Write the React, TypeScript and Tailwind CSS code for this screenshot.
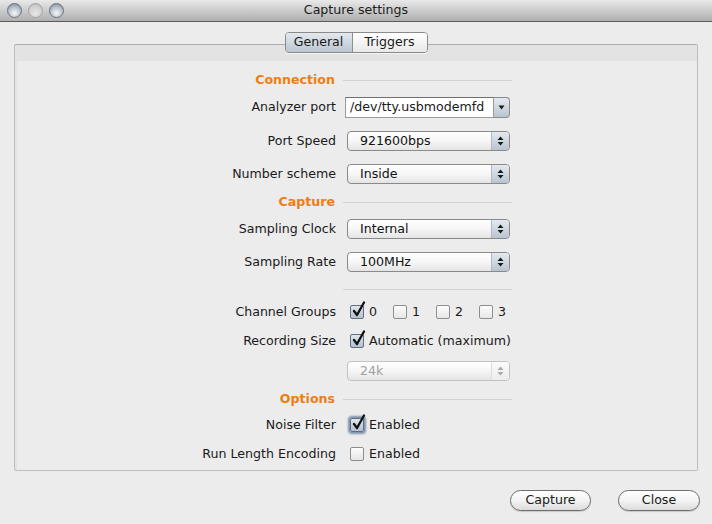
import React from "react";

function Arrows({ disabled = false }: { disabled?: boolean }) {
  const c = disabled ? "#a8a8a8" : "#1a1a1a";
  return (
    <svg width="7" height="10" viewBox="0 0 7 10">
      <path d="M0.5 4 L3.5 0.5 L6.5 4 Z" fill={c} />
      <path d="M0.5 6 L3.5 9.5 L6.5 6 Z" fill={c} />
    </svg>
  );
}

function Popup({ value, disabled = false }: { value: string; disabled?: boolean }) {
  return (
    <div
      className={`ml-[11px] w-[163px] h-[20px] flex rounded-[4px] border ${
        disabled ? "border-[#c2c2c2] text-[#a0a0a0]" : "border-[#8a8a8a] text-[#111]"
      } bg-gradient-to-b from-[#ffffff] via-[#f6f6f6] to-[#e4e4e4] overflow-hidden`}
    >
      <div className="flex-1 flex items-center pl-[12px] leading-none">{value}</div>
      <div
        className={`w-[18px] flex items-center justify-center border-l ${
          disabled
            ? "border-[#dedede] bg-gradient-to-b from-[#fbfbfb] to-[#ececec]"
            : "border-[#b0b8c2] bg-gradient-to-b from-[#e3e9ef] via-[#cfd8e1] to-[#b9c4cf]"
        }`}
      >
        <Arrows disabled={disabled} />
      </div>
    </div>
  );
}

function CheckBox({ checked = false, focus = false }: { checked?: boolean; focus?: boolean }) {
  return (
    <div
      className={`relative w-[14px] h-[14px] shrink-0 rounded-[2px] border ${
        checked
          ? "border-[#5f6e80] bg-gradient-to-b from-[#dfe6ee] to-[#b4c1cf]"
          : "border-[#8e8e8e] bg-gradient-to-b from-[#fdfdfd] to-[#e6e6e6]"
      } ${focus ? "shadow-[0_0_2px_2px_rgba(90,118,150,0.75)]" : ""}`}
    >
      {checked && (
        <svg
          className="absolute left-[1px] top-[-5px]"
          width="14"
          height="17"
          viewBox="0 0 14 17"
        >
          <path
            d="M2 10 L5 14 L12 1.5"
            stroke="#111"
            strokeWidth="2.3"
            fill="none"
            strokeLinecap="round"
            strokeLinejoin="round"
          />
        </svg>
      )}
    </div>
  );
}

function Label({ children }: { children: React.ReactNode }) {
  return <div className="w-[321px] text-right shrink-0">{children}</div>;
}

function Row({ label, mt, children }: { label?: string; mt: string; children?: React.ReactNode }) {
  return (
    <div className={`flex items-center h-[22px] ${mt}`}>
      <Label>{label}</Label>
      {children}
    </div>
  );
}

function Section({ title, mt }: { title?: string; mt: string }) {
  return (
    <div className={`flex items-center h-[18px] ${mt}`}>
      <div className="w-[320px] text-right shrink-0 font-bold text-[#f07d14]">{title}</div>
      <div className="ml-[8px] w-[169px] h-px bg-[#d2d2d2]" />
    </div>
  );
}

export default function App() {
  return (
    <div className="w-[712px] h-[524px] bg-[#ececec] flex flex-col overflow-hidden font-['DejaVu_Sans',sans-serif] text-[12.6px] text-[#1a1a1a]">
      {/* Title bar */}
      <div className="relative h-[22px] shrink-0 flex items-center justify-center bg-gradient-to-b from-[#e9e9e9] to-[#afafaf] border-b border-[#5c5c5c]">
        <div className="absolute left-[7px] top-[3px] flex gap-[6px]">
          <div className="w-[15px] h-[15px] rounded-full border border-[#6b7480] bg-[radial-gradient(circle_at_50%_70%,#f4f6f8_0%,#b7c0c9_55%,#6f7b88_100%)]" />
          <div className="w-[15px] h-[15px] rounded-full border border-[#a4a4a4] bg-[radial-gradient(circle_at_50%_70%,#e6e6e6_0%,#cfcfcf_60%,#b3b3b3_100%)]" />
          <div className="w-[15px] h-[15px] rounded-full border border-[#6b7480] bg-[radial-gradient(circle_at_50%_70%,#f4f6f8_0%,#b7c0c9_55%,#6f7b88_100%)]" />
        </div>
        <span className="text-[#1c1c1c]">Capture settings</span>
      </div>

      {/* Tabs */}
      <div className="relative z-10 mt-[10px] flex justify-center">
        <div className="flex h-[21px] rounded-[4px] border border-[#8a8a8a] overflow-hidden shadow-[0_1px_0_rgba(255,255,255,0.6)]">
          <div className="w-[67px] flex items-center justify-center bg-gradient-to-b from-[#e4e9ef] via-[#cfd7df] to-[#bcc6d0] border-r border-[#8e8e8e]">
            General
          </div>
          <div className="w-[74px] flex items-center justify-center bg-gradient-to-b from-[#ffffff] to-[#e9e9e9]">
            Triggers
          </div>
        </div>
      </div>

      {/* Panel */}
      <div className="mt-[-9px] mx-[14px] h-[427px] shrink-0 border border-[#bdbdbd] border-t-[#acacac] rounded-[2px] shadow-[inset_2px_16px_0_#e3e3e3]">
        <div className="flex flex-col pt-[26px]">
          <Section title="Connection" mt="mt-0" />
          <Row label="Analyzer port" mt="mt-[7px]">
            <div className="ml-[9px] w-[165px] h-[21px] flex">
              <div className="flex-1 bg-white border border-[#9b9b9b] border-t-[#6f6f6f] flex items-center pl-[4px] leading-none overflow-hidden whitespace-nowrap">
                /dev/tty.usbmodemfd
              </div>
              <div className="w-[16px] flex items-center justify-center rounded-r-[4px] border border-l-0 border-[#8a8a8a] bg-gradient-to-b from-[#e3e9ef] via-[#cfd8e1] to-[#b9c4cf]">
                <svg width="7" height="5" viewBox="0 0 7 5">
                  <path d="M0.5 0.5 L6.5 0.5 L3.5 4.5 Z" fill="#1a1a1a" />
                </svg>
              </div>
            </div>
          </Row>
          <Row label="Port Speed" mt="mt-[12px]">
            <Popup value="921600bps" />
          </Row>
          <Row label="Number scheme" mt="mt-[11px]">
            <Popup value="Inside" />
          </Row>
          <Section title="Capture" mt="mt-[8px]" />
          <Row label="Sampling Clock" mt="mt-[7px]">
            <Popup value="Internal" />
          </Row>
          <Row label="Sampling Rate" mt="mt-[11px]">
            <Popup value="100MHz" />
          </Row>
          <Section mt="mt-[7px]" />
          <Row label="Channel Groups" mt="mt-[3px]">
            <div className="ml-[14px] flex">
              {["0", "1", "2", "3"].map((n, i) => (
                <div key={n} className="w-[43px] flex items-center">
                  <CheckBox checked={i === 0} />
                  <span className="ml-[5px]">{n}</span>
                </div>
              ))}
            </div>
          </Row>
          <Row label="Recording Size" mt="mt-[7px]">
            <div className="ml-[14px] flex items-center">
              <CheckBox checked />
              <span className="ml-[5px]">Automatic (maximum)</span>
            </div>
          </Row>
          <Row mt="mt-[8px]">
            <Popup value="24k" disabled />
          </Row>
          <Section title="Options" mt="mt-[8px]" />
          <Row label="Noise Filter" mt="mt-[6px]">
            <div className="ml-[14px] flex items-center">
              <CheckBox checked focus />
              <span className="ml-[5px]">Enabled</span>
            </div>
          </Row>
          <Row label="Run Length Encoding" mt="mt-[7px]">
            <div className="ml-[14px] flex items-center">
              <CheckBox />
              <span className="ml-[5px]">Enabled</span>
            </div>
          </Row>
        </div>
      </div>

      {/* Buttons */}
      <div className="mt-[19px] flex justify-end pr-[12px] gap-[27px]">
        <div className="w-[81px] h-[21px] flex items-center justify-center rounded-full border border-[#6e6e6e] bg-gradient-to-b from-[#ffffff] via-[#f3f3f3] to-[#dcdcdc] shadow-[0_1px_1px_rgba(0,0,0,0.15)]">
          Capture
        </div>
        <div className="w-[82px] h-[21px] flex items-center justify-center rounded-full border border-[#6e6e6e] bg-gradient-to-b from-[#ffffff] via-[#f3f3f3] to-[#dcdcdc] shadow-[0_1px_1px_rgba(0,0,0,0.15)]">
          Close
        </div>
      </div>
    </div>
  );
}
